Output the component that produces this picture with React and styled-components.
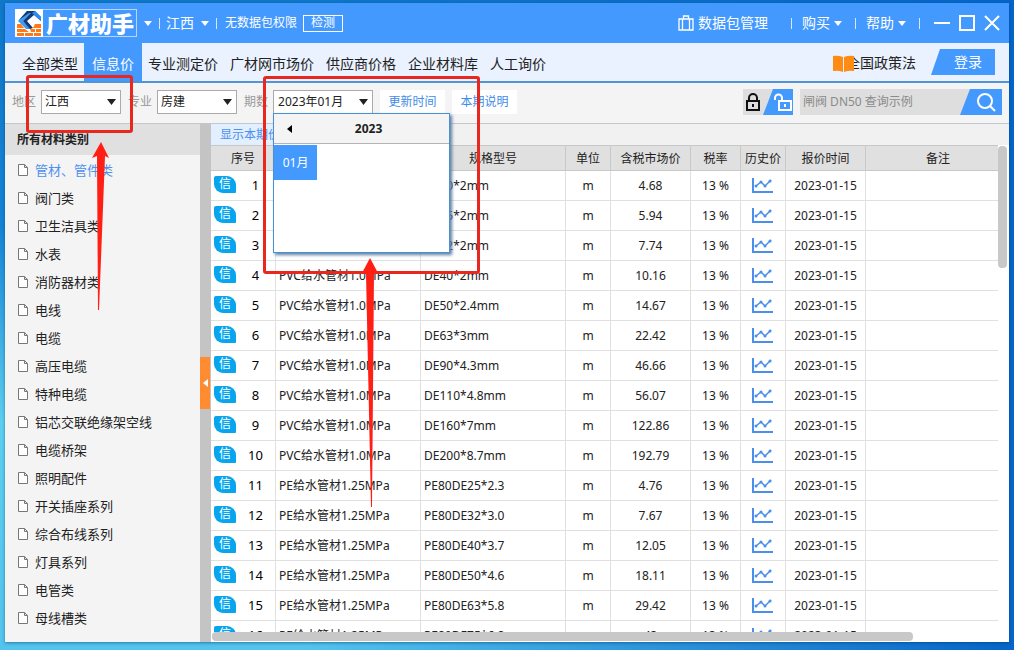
import { useState } from "react"
import styled, { createGlobalStyle } from "styled-components"

const categories = [
    "管材、管件类", "阀门类", "卫生洁具类", "水表", "消防器材类", "电线", "电缆", "高压电缆", "特种电缆",
    "铝芯交联绝缘架空线", "电缆桥架", "照明配件", "开关插座系列", "综合布线系列", "灯具系列", "电管类", "母线槽类"
]

const tabs = ["全部类型", "信息价", "专业测定价", "广材网市场价", "供应商价格", "企业材料库", "人工询价"]

const PVC = "PVC给水管材1.0MPa"
const PE = "PE给水管材1.25MPa"

const materials = [
    { name: PVC, spec: "DE20*2mm", price: "4.68" },
    { name: PVC, spec: "DE25*2mm", price: "5.94" },
    { name: PVC, spec: "DE32*2mm", price: "7.74" },
    { name: PVC, spec: "DE40*2mm", price: "10.16" },
    { name: PVC, spec: "DE50*2.4mm", price: "14.67" },
    { name: PVC, spec: "DE63*3mm", price: "22.42" },
    { name: PVC, spec: "DE90*4.3mm", price: "46.66" },
    { name: PVC, spec: "DE110*4.8mm", price: "56.07" },
    { name: PVC, spec: "DE160*7mm", price: "122.86" },
    { name: PVC, spec: "DE200*8.7mm", price: "192.79" },
    { name: PE, spec: "PE80DE25*2.3", price: "4.76" },
    { name: PE, spec: "PE80DE32*3.0", price: "7.67" },
    { name: PE, spec: "PE80DE40*3.7", price: "12.05" },
    { name: PE, spec: "PE80DE50*4.6", price: "18.11" },
    { name: PE, spec: "PE80DE63*5.8", price: "29.42" },
    { name: PE, spec: "PE80DE75*6.8", price: "43" }
]

const columns = [
    { title: "序号", width: 65 },
    { title: "材料名称", width: 145 },
    { title: "规格型号", width: 145 },
    { title: "单位", width: 45 },
    { title: "含税市场价", width: 80 },
    { title: "税率", width: 50 },
    { title: "历史价", width: 45 },
    { title: "报价时间", width: 80 },
    { title: "备注" }
]

function Caret({ w = 8, h = 5 }){
    return (
        <svg width={w} height={h} viewBox="0 0 8 5" fill="currentColor" preserveAspectRatio="none" aria-hidden="true">
            <path d="M0 0h8L4 5z"/>
        </svg>
    )
}

function LogoMark(){
    return (
        <svg width="28" height="28" viewBox="0 0 28 28" aria-hidden="true">
            <path fill="#fff" d="M0 0h28v28H0z"/>
            <path fill="#ff7a14" d="M2 15h4l3 4H2zM2 20h8l4 3H2zM2 24h7v3H2zM10 24h8v3h-8zM15 20h5v3h-4zM21 20h5v3h-5zM19 24h7v3h-7zM20 15h6v4h-8zM10 15h5l-2 3z"/>
            <path fill="#3d9bf5" d="M12 2h7L8 12l8 8h-5l-8-8z"/>
            <path fill="#123a78" d="M12 2h8l6 6v4l-7-6-7 6 6 7-3 1-7-8 8-8h-2L4 11z"/>
            <path fill="#2b8df0" d="M20 2l6 6v4l-9-8z"/>
        </svg>
    )
}

function ChartIcon(){
    return (
        <svg width="21" height="16" viewBox="0 0 21 16" fill="none" stroke="#4a90ea" aria-hidden="true">
            <path strokeWidth="2" d="M1 0v14h20"/>
            <path strokeWidth="1.5" d="M4 8l5-4 4 4 6-6"/>
            <g fill="#4a90ea" stroke="none">
                <circle cx="4" cy="8" r="1.5"/>
                <circle cx="9" cy="4" r="1.5"/>
                <circle cx="13" cy="8" r="1.5"/>
                <circle cx="18" cy="3" r="1.5"/>
            </g>
        </svg>
    )
}

function LockIcon({ open }){
    return (
        <svg width={open ? 18 : 14} height="18" viewBox={open ? "0 0 18 18" : "0 0 14 18"} fill="none" stroke="currentColor" strokeWidth="2" aria-hidden="true">
            {open ? (
                <>
                    <path d="M5 8h12v9H5z"/>
                    <path d="M8 8V5a3.5 3.5 0 0 0-7 0v2M11 11v3"/>
                </>
            ) : (
                <>
                    <path d="M1 8h12v9H1z"/>
                    <path d="M3 8V5a4 4 0 0 1 8 0v3M7 11v3"/>
                </>
            )}
        </svg>
    )
}

function Dropdown({ label, value, id, children }){
    return (
        <Field>
            <label htmlFor={id}>{label}</label>
            <SelectBox>
                <select id={id} defaultValue={value}>
                    <option>{value}</option>
                </select>
                <Caret w={9} h={6}/>
                {children}
            </SelectBox>
        </Field>
    )
}

function TitleBar(){
    return (
        <TitleRow>
            <Logo><LogoMark/><h1>广材助手</h1></Logo>
            <TitleButton aria-label="切换产品"><Caret/></TitleButton>
            <Separator/>
            <TitleButton $region>江西<Caret/></TitleButton>
            <Separator/>
            <Permission>无数据包权限</Permission>
            <CheckButton>检测</CheckButton>
            <Spacer/>
            <TitleButton $tight>
                <svg width="16" height="16" viewBox="0 0 16 16" fill="none" stroke="currentColor" aria-hidden="true">
                    <path strokeWidth="1.3" d="M1 4h14v11H1zM4.500 15V4M11.500 15V4M5.500 4V1h5v3"/>
                </svg>
                数据包管理
            </TitleButton>
            <Separator $gap={20}/>
            <TitleButton $tight>购买<Caret/></TitleButton>
            <Separator $gap={10}/>
            <TitleButton $tight>帮助<Caret/></TitleButton>
            <Separator $gap={10}/>
            <WindowButtons>
                <button aria-label="最小化"><svg width="16" height="16" viewBox="0 0 16 16"><path d="M0 8h16"/></svg></button>
                <button aria-label="最大化"><svg width="16" height="16" viewBox="0 0 16 16"><path d="M1 1h14v14H1z"/></svg></button>
                <button aria-label="关闭"><svg width="16" height="16" viewBox="0 0 16 16"><path d="M1 1l14 14M15 1L1 15"/></svg></button>
            </WindowButtons>
        </TitleRow>
    )
}

function Filters(){
    return (
        <FilterBar>
            <Dropdown id="region" label="地区" value="江西">
                <RegionFrame/>
                <RegionArrow width="18" height="168" viewBox="0 0 18 168" aria-hidden="true">
                    <path d="M9 0l8 16-4-2-6 154H6L5 14l-5 2z"/>
                </RegionArrow>
            </Dropdown>
            <Dropdown id="major" label="专业" value="房建"/>
            <Field>
                <label htmlFor="period">期数</label>
                <PeriodBox>
                    <PeriodButton id="period" aria-haspopup="dialog" aria-expanded="true">2023年01月<Caret w={9} h={6}/></PeriodButton>
                    <MonthPanel>
                        <header>
                            <button aria-label="上一年">
                                <svg width="5" height="8" viewBox="0 0 5 8"><path d="M5 0v8L0 4z"/></svg>
                            </button>
                            <strong>2023</strong>
                        </header>
                        <MonthButton>01月</MonthButton>
                    </MonthPanel>
                    <PeriodFrame/>
                    <PeriodArrow width="16" height="250" viewBox="0 0 16 250" aria-hidden="true">
                        <path d="M8 0l8 15h-4l-2 234H9L4 15H0z"/>
                    </PeriodArrow>
                </PeriodBox>
            </Field>
            <PlainButton>更新时间</PlainButton>
            <PlainButton>本期说明</PlainButton>
            <Spacer/>
            <LockSwitch>
                <button aria-label="锁定"><LockIcon/></button>
                <button aria-label="解锁"><LockIcon open/></button>
            </LockSwitch>
            <Search>
                <input aria-label="查询" placeholder="闸阀 DN50 查询示例"/>
                <button aria-label="搜索">
                    <svg width="20" height="20" viewBox="0 0 20 20" fill="none" stroke="#fff" strokeWidth="2">
                        <circle cx="9" cy="9" r="7"/>
                        <path d="M14 14l5 5"/>
                    </svg>
                </button>
            </Search>
        </FilterBar>
    )
}

function MaterialTable(){
    return (
        <TableArea>
            <TableScroll>
                <Table>
                    <colgroup>
                        {columns.map(col => <Col key={col.title} $width={col.width}/>)}
                    </colgroup>
                    <thead>
                        <tr>{columns.map(col => <th key={col.title}>{col.title}</th>)}</tr>
                    </thead>
                    <tbody>
                        {materials.map((item, i) => (
                            <tr key={item.spec}>
                                <td><IndexCell><Badge>信</Badge><span>{i + 1}</span></IndexCell></td>
                                <Text>{item.name}</Text>
                                <Text>{item.spec}</Text>
                                <td>m</td>
                                <td>{item.price}</td>
                                <td>13 %</td>
                                <td><HistoryButton aria-label="历史价"><ChartIcon/></HistoryButton></td>
                                <td>2023-01-15</td>
                                <td></td>
                            </tr>
                        ))}
                    </tbody>
                </Table>
            </TableScroll>
            <VerticalTrack><div/></VerticalTrack>
            <HorizontalTrack><div/></HorizontalTrack>
        </TableArea>
    )
}

export default function App(){
    const [tab, setTab] = useState("信息价")
    const [category, setCategory] = useState("管材、管件类")

    return (
        <Desktop>
            <GlobalStyle/>
            <Window>
                <TitleBar/>
                <NavBar>
                    {tabs.map(name => (
                        <Tab key={name} $active={name === tab} onClick={() => setTab(name)}>{name}</Tab>
                    ))}
                    <Spacer/>
                    <PolicyLink href="#policy">
                        <svg width="21" height="17" viewBox="0 0 21 17" fill="#ff8a14" aria-hidden="true">
                            <path d="M0 1q5-1 10 1v15q-5-2-10-1zM21 1q-5-1-10 1v15q5-2 10-1z"/>
                        </svg>
                        <span>全国政策法</span>
                    </PolicyLink>
                    <LoginButton>登录</LoginButton>
                </NavBar>
                <Filters/>
                <Main>
                    <Sidebar>
                        <h2>所有材料类别</h2>
                        <ul>
                            {categories.map(name => (
                                <li key={name}>
                                    <CategoryButton $active={name === category} onClick={() => setCategory(name)}>
                                        <svg width="10" height="12" viewBox="0 0 10 12" fill="#fff" stroke="#777" aria-hidden="true">
                                            <path d="M.5.5h6l3 3v8h-9zM6.500.5v3h3"/>
                                        </svg>
                                        {name}
                                    </CategoryButton>
                                </li>
                            ))}
                        </ul>
                    </Sidebar>
                    <Splitter>
                        <button aria-label="收起">
                            <svg width="5" height="8" viewBox="0 0 5 8"><path fill="#fff" d="M5 0v8L0 4z"/></svg>
                        </button>
                    </Splitter>
                    <Content>
                        <PriceBar><button>显示本期价格</button></PriceBar>
                        <MaterialTable/>
                    </Content>
                </Main>
            </Window>
        </Desktop>
    )
}

const GlobalStyle = createGlobalStyle`
    *{
        box-sizing: border-box;
    }

    body{
        margin: 0;
        font-family: "Noto Sans", "Noto Sans CJK SC", sans-serif;
        font-size: 12px;
        line-height: 16px;
        color: #222;
    }

    button, input, select{
        font: inherit;
        color: inherit;
        margin: 0;
        padding: 0;
        border: none;
        border-radius: 0;
        background: none;
    }

    button{
        cursor: pointer;
        white-space: nowrap;
    }

    h1, h2, ul{
        margin: 0;
        padding: 0;
        list-style: none;
    }
`

const Desktop = styled.div`
    height: 100vh;
    padding: 3px 5px 8px;
    background:
        linear-gradient(90deg, transparent 30%, #0565c8 100%),
        linear-gradient(180deg, #0f78c8 0%, #1584d6 35%, #5cd0f0 65%, #52c4ee 100%);
`

const Window = styled.div`
    height: 100%;
    display: flex;
    flex-direction: column;
    background-color: #f4f4f4;
    box-shadow: 0 1px 3px rgba(0, 50, 100, 0.5);
`

const Spacer = styled.div`
    flex: 1;
`

const TitleRow = styled.header`
    height: 40px;
    flex: none;
    display: flex;
    align-items: center;
    padding: 0 9px 0 10px;
    background-color: #4499ff;
    color: #fff;
    font-size: 14px;
`

const Logo = styled.div`
    display: flex;
    align-items: center;
    width: 122px;
    height: 28px;
    border: 1px solid #b4d6ff;
    border-left: none;

    h1{
        padding-left: 3px;
        font-size: 22px;
        font-weight: 900;
        line-height: 26px;
        white-space: nowrap;
    }
`

const TitleButton = styled.button`
    display: flex;
    align-items: center;
    gap: ${props => props.$tight ? "4px" : "7px"};
    padding: 0 ${props => props.$tight ? "3px" : "0"};
    margin-left: ${props => props.$region ? "6px" : "7px"};
`

const Separator = styled.span`
    width: 1px;
    height: 11px;
    flex: none;
    background-color: #d6e8ff;
    margin-left: ${props => props.$gap || 7}px;
`

const Permission = styled.span`
    margin-left: 8px;
    font-size: 12px;
    white-space: nowrap;
`

const CheckButton = styled.button`
    width: 40px;
    height: 17px;
    margin-left: 6px;
    border: 1px solid #fff;
    font-size: 12px;
    line-height: 14px;
`

const WindowButtons = styled.div`
    display: flex;
    gap: 9px;
    margin-left: 14px;

    button{
        display: flex;
    }

    svg{
        fill: none;
        stroke: #fff;
        stroke-width: 2;
    }
`

const NavBar = styled.nav`
    height: 40px;
    flex: none;
    display: flex;
    align-items: center;
    padding: 0 14px 0 11px;
    background-color: #eaf1ff;
    border-bottom: 2px solid #5195d6;
    font-size: 14px;
`

const Tab = styled.button`
    height: 100%;
    padding: 3px ${props => props.$active ? "8px" : "6px"} 0;
    background-color: ${props => props.$active ? "#4499ff" : "transparent"};
    color: ${props => props.$active ? "#fff" : "#222"};
`

const PolicyLink = styled.a`
    display: flex;
    align-items: center;
    padding-top: 2px;
    color: #222;
    text-decoration: none;

    span{
        display: flex;
        justify-content: flex-end;
        width: 62px;
        overflow: hidden;
        white-space: nowrap;
    }
`

const LoginButton = styled.button`
    width: 64px;
    height: 26px;
    margin-left: 15px;
    padding-left: 10px;
    background-color: #4499ff;
    color: #fff;
    clip-path: polygon(9px 0, 100% 0, 100% 100%, 0 100%);
`

const FilterBar = styled.section`
    height: 41px;
    flex: none;
    display: flex;
    align-items: center;
    gap: 7px;
    padding: 0 7px 2px;
    border-bottom: 1px solid #c2c8ce;
`

const Field = styled.div`
    display: flex;
    align-items: center;
    gap: 5px;

    label{
        color: #999;
        white-space: nowrap;
    }
`

const SelectBox = styled.div`
    position: relative;
    width: 80px;
    display: grid;
    align-items: center;

    select{
        grid-area: 1 / 1;
        width: 100%;
        height: 24px;
        padding: 0 20px 0 3px;
        border: 1px solid #aaa;
        background-color: #fff;
        appearance: none;
    }

    > svg:first-of-type{
        grid-area: 1 / 1;
        justify-self: end;
        margin-right: 5px;
        pointer-events: none;
    }
`

const PeriodBox = styled.div`
    position: relative;
    width: 100px;
`

const PeriodButton = styled.button`
    width: 100%;
    height: 24px;
    display: flex;
    align-items: center;
    justify-content: space-between;
    padding: 0 4px;
    border: 1px solid #aaa;
    background-color: #fff;
`

const MonthPanel = styled.div`
    position: absolute;
    z-index: 2;
    top: 23px;
    left: 0;
    width: 177px;
    height: 140px;
    border: 1px solid #4a90d2;
    background-color: #fff;
    box-shadow: 2px 2px 3px #5f7fa4;

    header{
        height: 30px;
        display: grid;
        grid-template-columns: 30px 1fr 16px;
        align-items: center;
        text-align: center;
        background-color: #f4f4f4;
        border-bottom: 1px solid #b5b5b5;
    }
`

const MonthButton = styled.button`
    display: block;
    width: 43px;
    height: 35px;
    margin-top: 1px;
    background-color: #4499ff;
    color: #fff;
`

const RedFrame = styled.div`
    position: absolute;
    z-index: 3;
    border: 3px solid #e8281e;
    border-radius: 3px;
    pointer-events: none;
`

const RegionFrame = styled(RedFrame)`
    inset: -15px -12px -19px -15px;
`

const PeriodFrame = styled(RedFrame)`
    top: -14px;
    left: -10px;
    width: 217px;
    height: 198px;
`

const RedArrow = styled.svg`
    position: absolute;
    z-index: 3;
    fill: #ff1f14;
    pointer-events: none;
`

const RegionArrow = styled(RedArrow)`
    top: 52px;
    left: 51px;
`

const PeriodArrow = styled(RedArrow)`
    top: 168px;
    left: 89px;
`

const PlainButton = styled.button`
    width: 65px;
    height: 24px;
    background-color: #fff;
    color: #3f8ce8;
`

const LockSwitch = styled.div`
    display: flex;
    width: 50px;
    height: 26px;
    background-color: #dedede;

    button{
        display: flex;
        align-items: center;
        justify-content: center;
    }

    button:first-child{
        width: 20px;
        color: #111;
    }

    button:last-child{
        flex: 1;
        justify-content: flex-end;
        padding-right: 1px;
        background-color: #4499ff;
        color: #fff;
        clip-path: polygon(10px 0, 100% 0, 100% 100%, 0 100%);
    }
`

const Search = styled.div`
    display: flex;
    width: 202px;
    height: 26px;
    background-color: #dedede;

    input{
        flex: 1;
        min-width: 0;
        padding: 0 3px;
        outline: none;
    }

    input::placeholder{
        color: #8a8a8a;
    }

    button{
        width: 42px;
        display: flex;
        align-items: center;
        justify-content: center;
        padding-left: 9px;
        background-color: #4499ff;
        clip-path: polygon(10px 0, 100% 0, 100% 100%, 0 100%);
    }
`

const Main = styled.main`
    flex: 1;
    min-height: 0;
    display: flex;
`

const Sidebar = styled.aside`
    width: 195px;
    overflow: hidden;

    h2{
        padding: 8px 12px;
        margin-bottom: 1px;
        height: 31px;
        font-size: 12px;
        font-weight: 700;
        line-height: 16px;
        background-color: #e0e0e0;
    }
`

const CategoryButton = styled.button`
    width: 100%;
    height: 28px;
    display: flex;
    align-items: center;
    gap: 7px;
    padding-left: 13px;
    font-size: 13px;
    color: ${props => props.$active ? "#4d90ee" : "#222"};
`

const Splitter = styled.div`
    width: 11px;
    display: flex;
    flex-direction: column;
    justify-content: center;
    background-color: #c4c4c4;

    button{
        height: 52px;
        width: 10px;
        display: flex;
        align-items: center;
        justify-content: center;
        background-color: #ff8c30;
    }
`

const Content = styled.section`
    flex: 1;
    min-width: 0;
    display: flex;
    flex-direction: column;
    background-color: #fff;
`

const PriceBar = styled.div`
    height: 21px;
    flex: none;
    background-color: #f1f1f1;

    button{
        height: 21px;
        padding: 0 9px;
        background-color: #e2efff;
        color: #4d90ee;
    }
`

const TableArea = styled.div`
    flex: 1;
    min-height: 0;
    display: grid;
    grid-template-columns: 1fr 11px;
    grid-template-rows: 1fr 10px;
`

const TableScroll = styled.div`
    overflow: hidden;
`

const Table = styled.table`
    width: 100%;
    table-layout: fixed;
    border-spacing: 0;

    th, td{
        padding: 0;
        text-align: center;
        white-space: nowrap;
        border-right: 1px solid #e0e0e0;
        border-bottom: 1px solid #e0e0e0;
    }

    th{
        height: 26px;
        padding-top: 2px;
        font-weight: 400;
        background-color: #e0e0e0;
        border-color: #c8c8c8;
        border-top: 1px solid #c8c8c8;
    }

    td{
        height: 30px;
    }

    th:last-child, td:last-child{
        border-right: none;
    }

    th:last-child{
        padding-left: 12px;
    }
`

const Col = styled.col`
    width: ${props => props.$width ? `${props.$width}px` : "auto"};
`

const Text = styled.td`
    && {
        padding-left: 3px;
        text-align: left;
    }
`

const IndexCell = styled.div`
    display: flex;
    align-items: center;
    padding: 0 0 2px 3px;

    span:last-child{
        flex: 1;
        font-size: 13px;
        color: #000;
    }
`

const Badge = styled.span`
    width: 22px;
    height: 17px;
    border-radius: 2px 9px 1px 9px;
    background-color: #08a5ee;
    color: #fff;
    line-height: 16px;
`

const HistoryButton = styled.button`
    display: block;
    height: 16px;
    margin: 0 auto;
    padding-right: 1px;
`

const VerticalTrack = styled.div`
    padding-top: 1px;

    div{
        width: 9px;
        height: 25%;
        border-radius: 4px;
        background-color: #c8c8c8;
    }
`

const HorizontalTrack = styled.div`
    grid-column: 1 / 3;
    padding-left: 1px;

    div{
        width: 88%;
        height: 9px;
        border-radius: 4px;
        background-color: #c8c8c8;
    }
`
